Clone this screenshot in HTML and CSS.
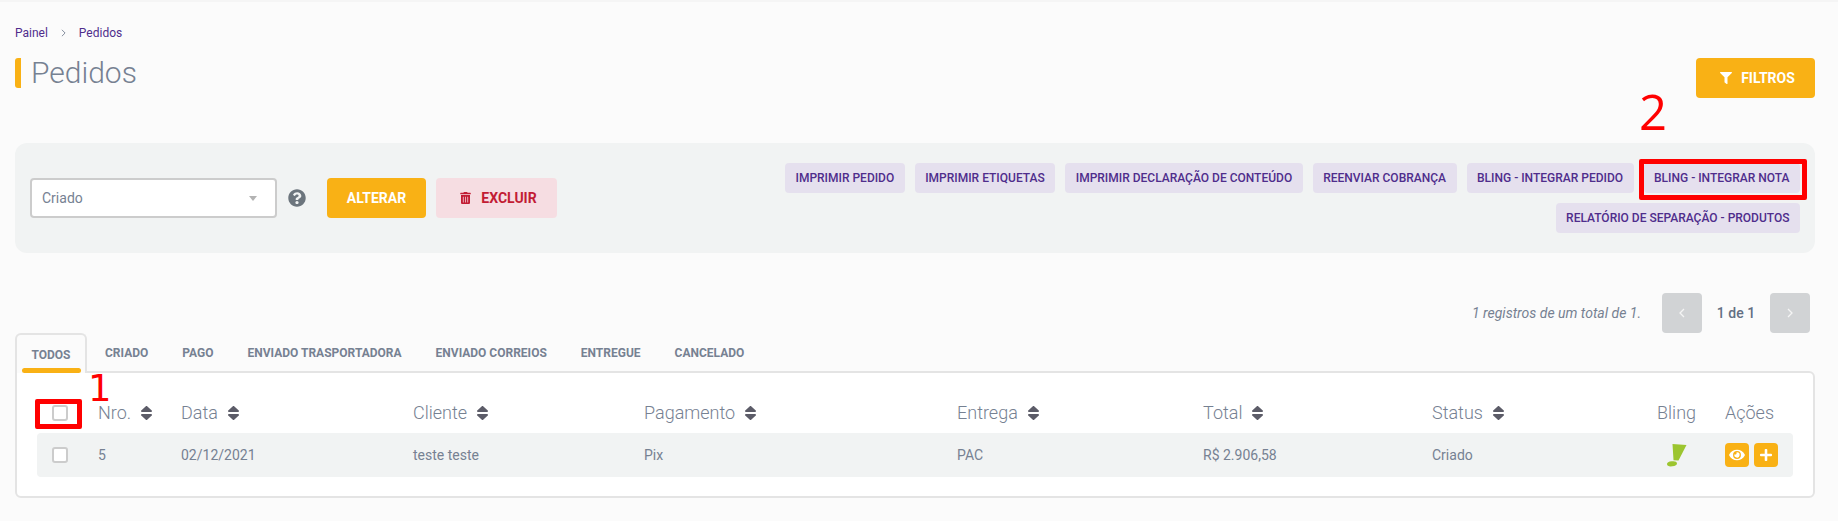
FILE: index.html
```html
<!DOCTYPE html>
<html lang="pt-BR">
<head>
<meta charset="utf-8">
<title>Pedidos</title>
<link rel="stylesheet" href="styles.css">
</head>
<body>
<svg class="defs" aria-hidden="true">
  <symbol id="sort" viewBox="18 55 284 402" preserveAspectRatio="none"><path d="M41 288h238c21.4 0 32.1 25.9 17 41L177 448c-9.4 9.4-24.6 9.4-33.9 0L24 329c-15.1-15.1-4.4-41 17-41zm255-105L177 64c-9.4-9.4-24.6-9.4-33.9 0L24 183c-15.1 15.1-4.4 41 17 41h238c21.4 0 32.1-25.9 17-41z"/></symbol>
</svg>
<div class="topline"></div>
<main class="page">
  <nav class="crumbs"><span>Painel</span><svg class="crumb-sep" viewBox="0 0 6 10"><path d="M1 1l4 4-4 4" fill="none" stroke="currentColor" stroke-width="1.1"/></svg><span>Pedidos</span></nav>

  <header class="head">
    <h1 class="title">Pedidos</h1>
    <button class="btn btn-yellow btn-filter"><svg class="ico-filter" viewBox="0 0 512 512"><path fill="currentColor" d="M487.976 0H24.028C2.71 0-8.047 25.866 7.058 40.971L192 225.941V432c0 7.831 3.821 15.17 10.237 19.662l80 55.98C298.02 518.69 320 507.493 320 487.98V225.941l184.947-184.97C520.021 25.896 509.338 0 487.976 0z"/></svg>FILTROS</button>
  </header>

  <section class="panel">
    <div class="panel-left">
      <div class="select"><span>Criado</span><i class="caret"></i></div>
      <svg class="ico-help" viewBox="0 0 512 512"><path fill="currentColor" d="M504 256c0 136.997-111.043 248-248 248S8 392.997 8 256C8 119.083 119.043 8 256 8s248 111.083 248 248zM262.655 90c-54.497 0-89.255 22.957-116.549 63.758-3.536 5.286-2.353 12.415 2.715 16.258l34.699 26.31c5.205 3.947 12.621 3.008 16.665-2.122 17.864-22.658 30.113-35.797 57.303-35.797 20.429 0 45.698 13.148 45.698 32.958 0 14.976-12.363 22.667-32.534 33.976C247.128 238.528 216 254.941 216 296v4c0 6.627 5.373 12 12 12h56c6.627 0 12-5.373 12-12v-1.333c0-28.462 83.186-29.647 83.186-106.667 0-58.002-60.165-102-116.531-102zM256 338c-25.365 0-46 20.635-46 46 0 25.364 20.635 46 46 46s46-20.636 46-46c0-25.365-20.635-46-46-46z"/></svg>
      <button class="btn btn-yellow btn-alter">ALTERAR</button>
      <button class="btn btn-danger"><svg class="ico-trash" viewBox="0 0 448 512"><path fill="currentColor" d="M32 464a48 48 0 0 0 48 48h288a48 48 0 0 0 48-48V128H32zm272-256a16 16 0 0 1 32 0v224a16 16 0 0 1-32 0zm-96 0a16 16 0 0 1 32 0v224a16 16 0 0 1-32 0zm-96 0a16 16 0 0 1 32 0v224a16 16 0 0 1-32 0zM432 32H312l-9.4-18.7A24 24 0 0 0 281.1 0H166.8a23.72 23.72 0 0 0-21.4 13.3L136 32H16A16 16 0 0 0 0 48v32a16 16 0 0 0 16 16h416a16 16 0 0 0 16-16V48a16 16 0 0 0-16-16z"/></svg>EXCLUIR</button>
    </div>
    <div class="panel-actions">
      <button class="chip">IMPRIMIR PEDIDO</button>
      <button class="chip">IMPRIMIR ETIQUETAS</button>
      <button class="chip">IMPRIMIR DECLARAÇÃO DE CONTEÚDO</button>
      <button class="chip">REENVIAR COBRANÇA</button>
      <button class="chip">BLING - INTEGRAR PEDIDO</button>
      <button class="chip">BLING - INTEGRAR NOTA</button>
      <button class="chip">RELATÓRIO DE SEPARAÇÃO - PRODUTOS</button>
    </div>
  </section>

  <div class="pager">
    <em class="pager-info">1 registros de um total de 1.</em>
    <button class="pager-btn"><svg viewBox="0 0 6 10"><path d="M5 1L1 5l4 4" fill="none" stroke="currentColor" stroke-width="1.3"/></svg></button>
    <span class="pager-count">1 de 1</span>
    <button class="pager-btn"><svg viewBox="0 0 6 10"><path d="M1 1l4 4-4 4" fill="none" stroke="currentColor" stroke-width="1.3"/></svg></button>
  </div>

  <ul class="tabs">
    <li class="tab tab-active">TODOS</li>
    <li class="tab">CRIADO</li>
    <li class="tab">PAGO</li>
    <li class="tab">ENVIADO TRASPORTADORA</li>
    <li class="tab">ENVIADO CORREIOS</li>
    <li class="tab">ENTREGUE</li>
    <li class="tab">CANCELADO</li>
  </ul>

  <section class="card">
    <table class="orders">
      <colgroup>
        <col class="c-check"><col class="c-nro"><col class="c-data"><col class="c-cliente"><col class="c-pag"><col class="c-ent"><col class="c-total"><col class="c-status"><col class="c-bling"><col class="c-acoes">
      </colgroup>
      <thead>
        <tr>
          <th class="cell-check"><input type="checkbox" class="check"></th>
          <th>Nro.<svg class="sort"><use href="#sort"/></svg></th>
          <th>Data<svg class="sort"><use href="#sort"/></svg></th>
          <th>Cliente<svg class="sort"><use href="#sort"/></svg></th>
          <th>Pagamento<svg class="sort"><use href="#sort"/></svg></th>
          <th>Entrega<svg class="sort"><use href="#sort"/></svg></th>
          <th>Total<svg class="sort"><use href="#sort"/></svg></th>
          <th>Status<svg class="sort"><use href="#sort"/></svg></th>
          <th>Bling</th>
          <th>Ações</th>
        </tr>
      </thead>
      <tbody>
        <tr>
          <td class="cell-check"><input type="checkbox" class="check"></td>
          <td>5</td>
          <td>02/12/2021</td>
          <td>teste teste</td>
          <td>Pix</td>
          <td>PAC</td>
          <td>R$ 2.906,58</td>
          <td>Criado</td>
          <td><svg class="ico-bling" viewBox="0 0 20 24"><path fill="#9cc52f" d="M5.500 1L19.500 2 11.500 17.500 6.500 17.300z"/><ellipse fill="#9cc52f" cx="5" cy="20.800" rx="5" ry="2.500" transform="rotate(-6 5 20.800)"/></svg></td>
          <td>
            <div class="row-actions">
              <button class="mini"><svg class="ico-eye" viewBox="0 0 576 512"><path fill="currentColor" d="M572.52 241.4C518.29 135.59 410.93 64 288 64S57.68 135.64 3.48 241.41a32.35 32.35 0 0 0 0 29.19C57.71 376.41 165.07 448 288 448s230.32-71.64 284.52-177.41a32.35 32.35 0 0 0 0-29.19zM288 400a144 144 0 1 1 144-144 143.93 143.93 0 0 1-144 144zm0-240a95.31 95.31 0 0 0-25.31 3.79 47.85 47.85 0 0 1-66.9 66.9A95.78 95.78 0 1 0 288 160z"/></svg></button>
              <button class="mini"><svg class="ico-plus" viewBox="0 0 448 512"><path fill="currentColor" d="M416 208H272V64c0-17.67-14.33-32-32-32h-32c-17.67 0-32 14.33-32 32v144H32c-17.67 0-32 14.33-32 32v32c0 17.67 14.33 32 32 32h144v144c0 17.67 14.33 32 32 32h32c17.67 0 32-14.33 32-32V304h144c17.67 0 32-14.33 32-32v-32c0-17.67-14.33-32-32-32z"/></svg></button>
            </div>
          </td>
        </tr>
      </tbody>
    </table>
  </section>
</main>

<div class="mark mark-check"></div>
<div class="mark mark-nota"></div>
<span class="mark-num mark-num-1">1</span>
<span class="mark-num mark-num-2">2</span>
</body>
</html>
```

FILE: styles.css
```css
* { box-sizing: border-box; }
html, body { margin: 0; padding: 0; }
body {
  position: relative;
  height: 521px;
  overflow: hidden;
  background: #fbfbfb;
  color: #768192;
  font-family: Roboto, "Liberation Sans", sans-serif;
  font-size: 14px;
}
button { font-family: inherit; border: 0; cursor: pointer; }
.defs { position: absolute; width: 0; height: 0; }

.topline { height: 2px; background: #f5f5f5; }
.page { padding: 0 23px 0 15px; }

.crumbs {
  display: flex;
  align-items: center;
  height: 14px;
  margin-top: 24px;
  font-size: 12px;
  line-height: 14px;
  color: #4f2d8c;
}
.crumb-sep { width: 5px; height: 8px; margin: 0 13px; color: #768192; }

.head {
  display: flex;
  justify-content: space-between;
  height: 40px;
  margin-top: 18px;
}
.title {
  height: 30px;
  margin: 0;
  padding-left: 10px;
  border-left: 6px solid #f9b115;
  border-radius: 3px;
  font-size: 30px;
  font-weight: 300;
  line-height: 30px;
  color: #768192;
}

.btn {
  display: flex;
  align-items: center;
  justify-content: center;
  height: 40px;
  border-radius: 4px;
  font-size: 14px;
  font-weight: 700;
  line-height: 16px;
}
.btn-yellow { background: #f9b115; color: #fff; }
.btn-filter { width: 119px; padding: 0 0 0 4px; }
.ico-filter { width: 12px; height: 12px; margin-right: 9px; }
.btn-alter { width: 99px; margin-left: 21px; }
.btn-danger { width: 121px; margin-left: 10px; padding: 0 0 0 4px; background: #f6dde2; color: #c21c34; }
.ico-trash { width: 11px; height: 12px; margin-right: 10px; }

.panel {
  display: flex;
  align-items: center;
  margin-top: 45px;
  padding: 20px 15px;
  border-radius: 12px;
  background: #f1f3f3;
}
.panel-left { display: flex; align-items: center; }
.select {
  display: flex;
  align-items: center;
  justify-content: space-between;
  width: 247px;
  height: 40px;
  padding: 0 18px 0 10px;
  border: 2px solid #ccc;
  border-radius: 4px;
  background: #fff;
}
.caret {
  width: 0;
  height: 0;
  border-left: 4px solid transparent;
  border-right: 4px solid transparent;
  border-top: 5px solid #b3b3b3;
}
.ico-help { width: 18px; height: 18px; margin-left: 11px; color: #6c757d; }

.panel-actions {
  flex: 1;
  display: flex;
  flex-wrap: wrap;
  justify-content: flex-end;
  gap: 10px;
}
.chip {
  height: 30px;
  padding: 0 10.5px;
  border-radius: 4px;
  background: #e5e0ee;
  color: #4f2d8c;
  font-size: 12px;
  font-weight: 500;
  line-height: 14px;
}

.pager {
  display: flex;
  align-items: center;
  justify-content: flex-end;
  height: 40px;
  margin-top: 40px;
  padding-right: 5px;
}
.pager-info { margin-right: 21px; }
.pager-btn {
  display: flex;
  align-items: center;
  justify-content: center;
  width: 40px;
  height: 40px;
  padding: 0;
  border-radius: 4px;
  background: #d1d3d5;
  color: #f5f5f5;
}
.pager-btn svg { width: 6px; height: 10px; }
.pager-count { width: 68px; text-align: center; font-weight: 500; color: #636f83; }

.tabs {
  position: relative;
  z-index: 1;
  display: flex;
  height: 40px;
  margin: 0;
  padding: 0;
  list-style: none;
}
.tab {
  height: 40px;
  padding: 13px 17px 0;
  font-size: 12px;
  font-weight: 700;
  line-height: 14px;
  color: #768192;
}
.tab-active {
  position: relative;
  width: 72px;
  margin-right: 1px;
  padding: 13px 0 0;
  border: 2px solid #e4e4e4;
  border-bottom: 0;
  border-radius: 6px 6px 0 0;
  background: #fbfbfb;
  text-align: center;
}
.tab-active::after {
  content: "";
  position: absolute;
  left: 5px;
  right: 4px;
  bottom: 0;
  height: 5px;
  border-radius: 3px;
  background: #f9b115;
}

.card {
  margin-top: -2px;
  padding: 0 20px 19px;
  border: 2px solid #e4e4e4;
  border-radius: 0 6px 6px 6px;
  background: #fff;
}
.orders {
  width: 100%;
  table-layout: fixed;
  border-collapse: separate;
  border-spacing: 0;
}
.c-check { width: 61px; }
.c-nro { width: 83px; }
.c-data { width: 232px; }
.c-cliente { width: 231px; }
.c-pag { width: 313px; }
.c-ent { width: 246px; }
.c-total { width: 229px; }
.c-status { width: 225px; }
.c-bling, .c-acoes { width: 68px; }

.orders th {
  height: 60px;
  padding: 20px 0 0;
  font-size: 18px;
  font-weight: 300;
  line-height: 20px;
  text-align: left;
  color: #768192;
  white-space: nowrap;
}
.orders td {
  height: 44px;
  padding: 0;
  background: #f1f3f3;
  color: #768192;
}
.orders td:first-child { border-radius: 4px 0 0 4px; }
.orders td:last-child { border-radius: 0 4px 4px 0; }
.cell-check { padding-left: 15px !important; }
.check {
  appearance: none;
  display: block;
  width: 16px;
  height: 16px;
  margin: 0;
  border: 2px solid #ccc;
  border-radius: 3px;
  background: #fff;
}
.sort { width: 11px; height: 14px; margin-left: 10px; vertical-align: -1px; fill: #5c5c68; }
.ico-bling { display: block; width: 20px; height: 24px; margin-left: 10px; }
.row-actions { display: flex; gap: 5px; }
.mini {
  display: flex;
  align-items: center;
  justify-content: center;
  width: 24px;
  height: 24px;
  padding: 0;
  border-radius: 4px;
  background: #f9b115;
  color: #fff;
}
.ico-eye { width: 16px; height: 14px; }
.ico-plus { width: 12px; height: 14px; }

.mark { position: absolute; border: 5px solid #f00; border-radius: 2px; }
.mark-check { left: 35px; top: 399px; width: 47px; height: 30px; }
.mark-nota { left: 1639px; top: 159px; width: 168px; height: 41px; }
.mark-num { position: absolute; color: #f00; }
.mark-num-1 { left: 88px; top: 375px; font-family: "DejaVu Sans", sans-serif; font-size: 37px; line-height: 28px; }
.mark-num-2 { left: 1639px; top: 87px; font-family: "Open Sans", sans-serif; font-size: 49px; line-height: 1; }
```
